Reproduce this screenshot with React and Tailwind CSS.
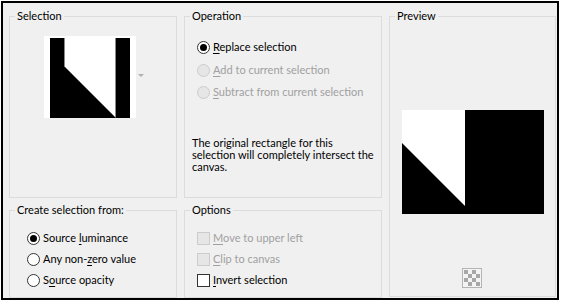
import React from 'react'

// ── Small controls ────────────────────────────────────────────────────────────

function Radio({ checked, disabled }) {
  return (
    <span
      className={`flex items-center justify-center w-[13px] h-[13px] rounded-full border shrink-0 ${
        disabled ? 'border-[#cccccc] bg-[#e6e6e6]' : 'border-[#333333] bg-white'
      }`}
    >
      {checked && <span className="w-[7px] h-[7px] rounded-full bg-black" />}
    </span>
  )
}

function Check({ disabled }) {
  return (
    <span
      className={`w-[13px] h-[13px] border shrink-0 ${
        disabled ? 'border-[#cccccc] bg-[#e6e6e6]' : 'border-[#333333] bg-white'
      }`}
    />
  )
}

function Row({ control, disabled, children }) {
  return (
    <div className={`flex items-center h-4 gap-[3px] ${disabled ? 'text-[#a0a0a0]' : 'text-black'}`}>
      {control}
      <span className="leading-4 whitespace-nowrap">{children}</span>
    </div>
  )
}

function Group({ title, className = '', children }) {
  return (
    <fieldset className={`border border-[#dcdcdc] pl-[5px] ${className}`}>
      <legend className="px-[2px] leading-4">{title}</legend>
      {children}
    </fieldset>
  )
}

const U = ({ children }) => <span className="underline underline-offset-2">{children}</span>

// ── Pictures ─────────────────────────────────────────────────────────────────

function Thumb() {
  return (
    <svg width="80" height="80" viewBox="0 0 80 80">
      <rect width="80" height="80" fill="#000" />
      <rect x="14" y="0" width="51" height="80" fill="#fff" />
      <line x1="65.5" y1="0" x2="65.5" y2="80" stroke="#8a8a8a" />
      <line x1="14.5" y1="0" x2="14.5" y2="28" stroke="#8a8a8a" />
      <polygon points="14,28 66,80 14,80" fill="#000" />
    </svg>
  )
}

function PreviewPic() {
  return (
    <svg width="142" height="104" viewBox="0 0 142 104">
      <rect width="142" height="104" fill="#000" />
      <polygon points="0,0 63,0 63,96 0,33" fill="#fff" />
    </svg>
  )
}

function CheckerIcon() {
  const cells = []
  for (let r = 0; r < 4; r++)
    for (let c = 0; c < 4; c++)
      if ((r + c) % 2 === 0) cells.push(<rect key={`${r}-${c}`} x={2 + c * 4} y={2 + r * 4} width="4" height="4" fill="#a8a8a8" />)
  return (
    <svg width="20" height="20" viewBox="0 0 20 20">
      <rect x="0.5" y="0.5" width="19" height="19" fill="#f4f4f4" stroke="#b4b4b4" />
      {cells}
    </svg>
  )
}

// ── Main component ────────────────────────────────────────────────────────────

export default function App() {
  return (
    <div className="w-[564px] h-[304px] bg-white pl-px pt-px font-['Lato',sans-serif] text-[11px] text-black">
      <div className="w-[558px] h-[299px] border-2 border-black bg-[#f0f0f0] flex gap-[7px] pl-[6px] pt-[5px]">

        {/* Left column */}
        <div className="flex flex-col gap-[4px] w-[168px]">
          <Group title="Selection" className="h-[190px]">
            <div className="flex items-center ml-[29px] mt-[12px]">
              <div className="w-[92px] h-[82px] bg-white pl-[6px] pt-[2px]">
                <Thumb />
              </div>
              <svg width="6" height="4" viewBox="0 0 6 4" className="ml-[2px] mt-[-3px]">
                <polygon points="0,0 6,0 3,3" fill="#b0b0b0" />
              </svg>
            </div>
          </Group>

          <Group title="Create selection from:" className="h-[96px]">
            <div className="flex flex-col gap-[5px] ml-[12px] mt-[12px]">
              <Row control={<Radio checked />}>Source <U>l</U>uminance</Row>
              <Row control={<Radio />}>Any non-<U>z</U>ero value</Row>
              <Row control={<Radio />}>S<U>o</U>urce opacity</Row>
            </div>
          </Group>
        </div>

        {/* Middle column */}
        <div className="flex flex-col gap-[4px] w-[198px]">
          <Group title="Operation" className="h-[190px]">
            <div className="flex flex-col ml-[7px] mt-[15px]">
              <Row control={<Radio checked />}><U>R</U>eplace selection</Row>
              <div className="mt-[7px]">
                <Row control={<Radio disabled />} disabled><U>A</U>dd to current selection</Row>
              </div>
              <div className="mt-[6px]">
                <Row control={<Radio disabled />} disabled><U>S</U>ubtract from current selection</Row>
              </div>
            </div>
            <p className="mt-[37px] ml-[2px] leading-[12px] whitespace-nowrap">
              The original rectangle for this<br />
              selection will completely intersect the<br />
              canvas.
            </p>
          </Group>

          <Group title="Options" className="h-[96px]">
            <div className="flex flex-col gap-[5px] ml-[7px] mt-[12px]">
              <Row control={<Check disabled />} disabled><U>M</U>ove to upper left</Row>
              <Row control={<Check disabled />} disabled><U>C</U>lip to canvas</Row>
              <Row control={<Check />}><U>I</U>nvert selection</Row>
            </div>
          </Group>
        </div>

        {/* Preview */}
        <Group title="Preview" className="w-[167px] h-[289px]">
          <div className="flex flex-col">
            <div className="ml-[7px] mt-[86px]">
              <PreviewPic />
            </div>
            <div className="ml-[67px] mt-[54px]">
              <CheckerIcon />
            </div>
          </div>
        </Group>

      </div>
    </div>
  )
}
